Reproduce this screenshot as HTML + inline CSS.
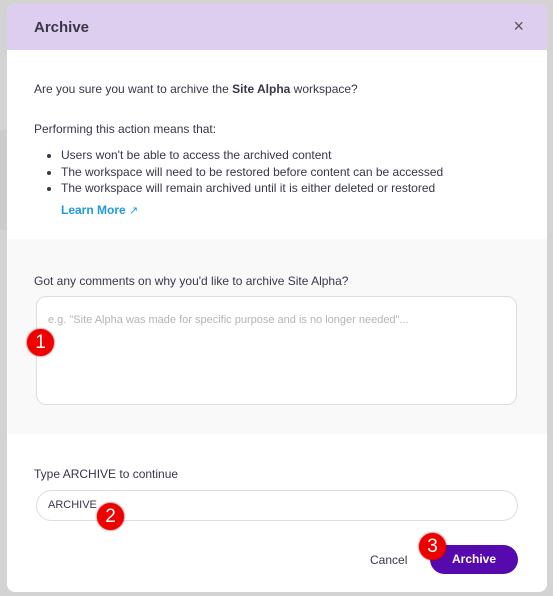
<!DOCTYPE html>
<html><head><style>
body{margin:0;width:553px;height:596px;background:#d3d3d3;font-family:"Liberation Sans",sans-serif;position:relative;overflow:hidden;color:#2f2c3b}
.modal{position:absolute;left:7px;top:4px;width:540px;height:588px;background:#fff;border-radius:8px;overflow:hidden}
.hdr{height:46px;background:#ddcdef;position:relative}
.hdr .t{position:absolute;left:27px;top:15px;font-size:15px;color:#3a3548;font-weight:bold}
.hdr .x{position:absolute;right:23px;top:12px;font-size:18px;color:#555}
.p{position:absolute;left:27px;font-size:12px;color:#3a3548}
ul{position:absolute;left:27px;top:143px;margin:0;padding-left:27px;font-size:12px;line-height:16.5px;color:#3a3548}
.gray{position:absolute;left:0;top:235px;width:540px;height:195px;background:#f9f9fa}
.ta{position:absolute;left:29px;top:292px;width:481px;height:109px;border:1px solid #ddd;border-radius:10px;background:#fff;box-sizing:border-box}
.in{position:absolute;left:29px;top:486px;width:482px;height:31px;border:1px solid #ddd;border-radius:16px;background:#fff;box-sizing:border-box}
.btn{position:absolute;left:423px;top:541px;width:88px;height:29px;background:#560aad;border-radius:15px;color:#fff;font-weight:bold;font-size:12px;text-align:center;line-height:29px}
.b{position:absolute;width:27px;height:27px;border-radius:50%;background:#e00;color:#fff;font-size:19px;text-align:center;line-height:27px;box-shadow:0 0 2px #900}
</style></head><body>
<div style="position:absolute;left:0;top:130px;width:7px;height:100px;background:#ccc"></div>
<div class="modal">
<div class="hdr"><div class="t">Archive</div><div class="x">×</div></div>
<div class="p" style="top:78px">Are you sure you want to archive the <b>Site Alpha</b> workspace?</div>
<div class="p" style="top:118px">Performing this action means that:</div>
<ul><li>Users won't be able to access the archived content</li><li>The workspace will need to be restored before content can be accessed</li><li>The workspace will remain archived until it is either deleted or restored</li></ul>
<div class="p" style="left:54px;top:199px;color:#1e9be0;font-weight:bold">Learn More <span style="font-weight:normal;font-size:11px">↗</span></div>
<div class="gray"></div>
<div class="p" style="top:270px">Got any comments on why you'd like to archive Site Alpha?</div>
<div class="ta"><div style="position:absolute;left:11px;top:17px;font-size:11px;color:#b5b5b5">e.g. "Site Alpha was made for specific purpose and is no longer needed"...</div></div>
<div class="p" style="top:463px">Type ARCHIVE to continue</div>
<div class="in"><div style="position:absolute;left:11px;top:8px;font-size:11px;color:#3a3548">ARCHIVE</div></div>
<div class="p" style="left:363px;top:549px">Cancel</div>
<div class="btn">Archive</div>
</div>
<div class="b" style="left:27px;top:329px">1</div>
<div class="b" style="left:97px;top:503px">2</div>
<div class="b" style="left:419px;top:533px">3</div>
</body></html>
